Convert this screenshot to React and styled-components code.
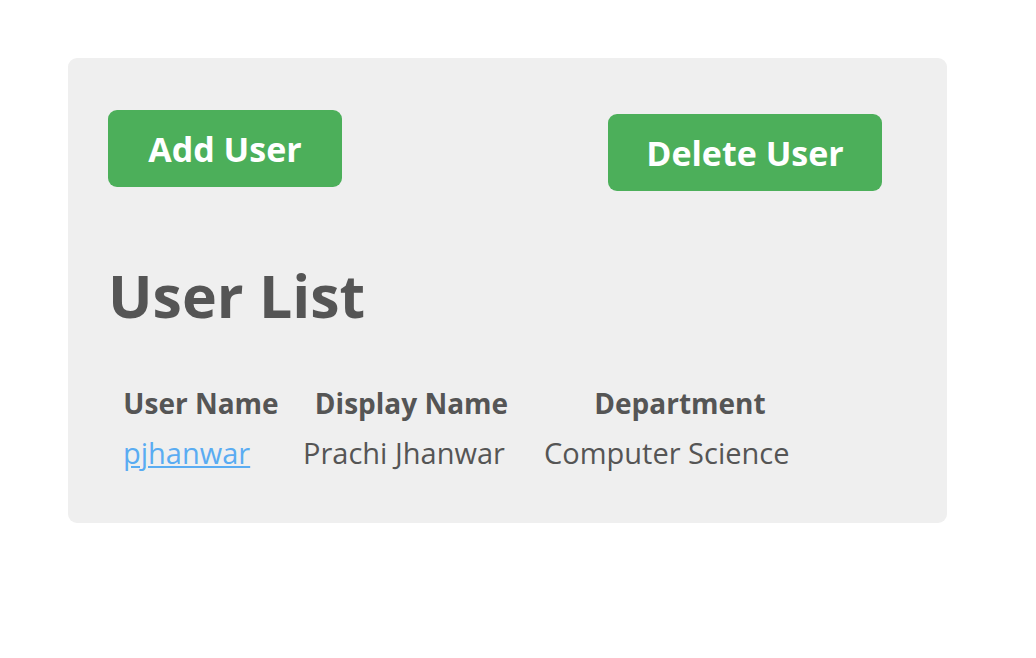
import React from "react";
import styled, { createGlobalStyle } from "styled-components";

const users = [
  { userName: "pjhanwar", displayName: "Prachi Jhanwar", department: "Computer Science" },
];

function App() {
  return (
    <>
      <GlobalStyle />
      <Panel>
        <Toolbar>
          <ActionButton>Add User</ActionButton>
          <ActionButton wide offset={4}>Delete User</ActionButton>
        </Toolbar>
        <Title>User List</Title>
        <Table>
          <HeaderCell>User Name</HeaderCell>
          <HeaderCell>Display Name</HeaderCell>
          <HeaderCell>Department</HeaderCell>
          {users.map((u) => (
            <React.Fragment key={u.userName}>
              <Cell>
                <UserLink href="#">{u.userName}</UserLink>
              </Cell>
              <Cell>{u.displayName}</Cell>
              <Cell>{u.department}</Cell>
            </React.Fragment>
          ))}
        </Table>
      </Panel>
    </>
  );
}

const GlobalStyle = createGlobalStyle`
  body {
    margin: 0;
    background: #ffffff;
    font-family: "Open Sans", "DejaVu Sans", sans-serif;
    color: #555555;
  }
`;

const Panel = styled.div`
  margin: 58px 0 0 68px;
  width: 879px;
  height: 465px;
  box-sizing: border-box;
  padding: 52px 40px 0 40px;
  background: #efefef;
  border-radius: 9px;
`;

const Toolbar = styled.div`
  display: flex;
  align-items: flex-start;
  gap: 266px;
`;

const ActionButton = styled.button`
  margin-top: ${(props) => props.offset || 0}px;
  width: ${(props) => (props.wide ? 274 : 234)}px;
  height: 77px;
  border: none;
  border-radius: 9px;
  background: #4caf5a;
  color: #ffffff;
  font-family: inherit;
  font-size: 34px;
  font-weight: 700;
  padding: 0;
`;

const Title = styled.h1`
  margin: 69px 0 0 0;
  font-size: 59px;
  line-height: 70px;
  font-weight: 700;
  color: #555555;
`;

const Table = styled.div`
  display: grid;
  grid-template-columns: 164px 225px 280px;
  column-gap: 16px;
  margin: 48px 0 0 11px;
`;

const HeaderCell = styled.div`
  text-align: center;
  font-size: 28px;
  font-weight: 700;
  line-height: 50px;
`;

const Cell = styled.div`
  padding-left: 4px;
  font-size: 29px;
  line-height: 50px;
`;

const UserLink = styled.a`
  color: #5aacf2;
  text-decoration: underline;
`;

export default App;
